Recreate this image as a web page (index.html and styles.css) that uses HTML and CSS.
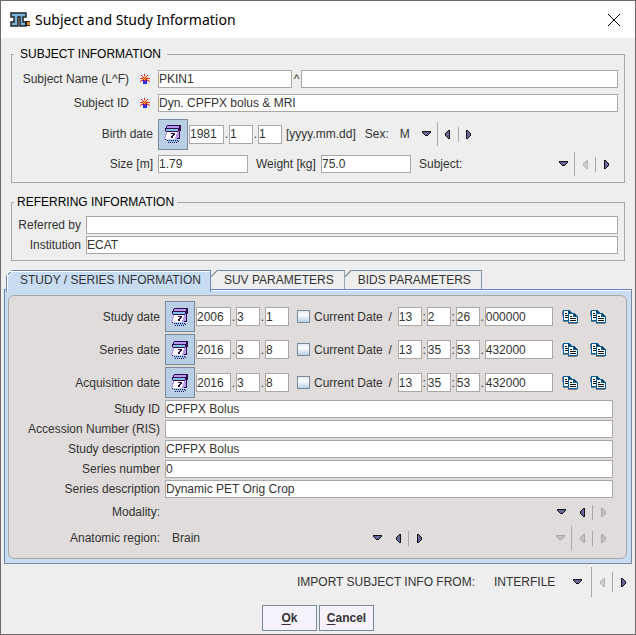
FILE: index.html
```html
<!DOCTYPE html>
<html lang="en">
<head>
<meta charset="utf-8">
<title>Subject and Study Information</title>
<link rel="stylesheet" href="styles.css">
</head>
<body>
<svg class="sprite" aria-hidden="true">
  <symbol id="calendar" viewBox="0 0 18 18" shape-rendering="crispEdges">
    <path fill="#7fc4f0" d="M2 4h12v2H2zM4 15h10v2H4z"/>
    <path fill="#b79af0" d="M1 6h14v8H0v-2h1V9h1V7H1zM3 1h13v2H3z"/>
    <path fill="#fff" d="M4 6h9v3h-1v3h-1v2H1v-1h1v-3h1V7h1z"/>
    <path fill="#330a4a" d="M3 0h14v1H3zM2 1h1v2H2zM1 3h14v1H1zM1 4h1v2H1zM2 6h12v1H2zM15 1h2v5h-2zM15 6h1v8h-1zM14 4h1v2h-1zM7 8h4v1H7zM9 9h2v1H9zM8 10h2v1H8zM7 11h2v2H7zM13 13h2v1h-2z"/>
    <path fill="#330a4a" d="M1 14h1v1H1zM3 15h1v1H3zM5 15h1v1H5zM7 15h1v1H7zM9 15h1v1H9zM11 15h1v1h-1zM13 15h1v1h-1zM4 17h1v1H4zM6 17h1v1H6zM8 17h1v1H8zM10 17h1v1h-1zM12 17h1v1h-1zM14 16h1v1h-1z"/>
  </symbol>
  <symbol id="copy" viewBox="0 0 16 14" shape-rendering="crispEdges">
    <path fill="#808080" d="M0 1h1v11h5v-1H1zM6 12h1v1h8v1H6z"/>
    <path fill="#005f9e" d="M1 0h6l3 3v8H1z"/>
    <path fill="#fff" d="M2 1h4v3h3v6H2z"/>
    <path fill="#111" d="M3 3h2v1H3zM3 5h3v1H3zM3 7h3v1H3zM6 1h1v1H6zM7 2h1v1H7z"/>
    <path fill="#005f9e" d="M6 3h6l4 4v6H6z"/>
    <path fill="#fff" d="M7 4h4v3h4v5H7z"/>
    <path fill="#111" d="M8 6h2v1H8zM8 8h6v1H8zM8 10h6v1H8zM12 4h1v1h-1zM13 5h1v1h-1z"/>
  </symbol>
  <symbol id="required" viewBox="0 0 10 10" shape-rendering="crispEdges">
    <path fill="#d8232a" d="M4 0h1v3H4zM1 1h1v1H1zM2 2h1v1H2zM7 1h1v1H7zM6 2h1v1H6zM0 4h2v1H0zM8 4h2v1H8zM3 3h4v1H3zM2 4h6v2H2zM1 6h2v1H1zM7 6h2v1H7zM0 7h1v1H0zM9 7h1v1H9z"/>
    <path fill="#ffc933" d="M4 2h1v2H4zM2 3h1v1H2zM6 3h1v1H6zM3 4h1v1H3zM5 4h1v1H5zM2 5h1v1H2zM4 5h1v1H4zM7 5h1v1H7z"/>
    <path fill="#2a2af0" d="M3 6h4v4H3z"/>
    <path fill="#d8232a" d="M4 6h2v1H4z"/>
  </symbol>
  <symbol id="down" viewBox="0 0 9 5" shape-rendering="crispEdges">
    <path class="edge" d="M0 0h9v2H8v1H7v1H6v1H3V4H2V3H1V2H0z"/>
    <path class="core" d="M1 1h7v1H7v1H6v1H3V3H2V2H1z"/>
  </symbol>
  <symbol id="prev" viewBox="0 0 5 9" shape-rendering="crispEdges">
    <path class="edge" d="M5 0v9H3V8H2V7H1V6H0V3h1V2h1V1h1V0z"/>
    <path class="core" d="M4 1v7H3V7H2V6H1V3h1V2h1V1z"/>
  </symbol>
  <symbol id="next" viewBox="0 0 5 9" shape-rendering="crispEdges">
    <path class="edge" d="M0 0v9h2V8h1V7h1V6h1V3H4V2H3V1H2V0z"/>
    <path class="core" d="M1 1v7h1V7h1V6h1V3H3V2H2V1z"/>
  </symbol>
</svg>

<main class="window">
  <header class="titlebar">
    <svg class="logo" viewBox="0 0 21 15" aria-hidden="true">
      <path d="M1 1h15v4h-3v5h3v4h-6V5H8v9H1v-4h3V5H1z" fill="#79b4dc" stroke="#222" stroke-width="1.5"/>
      <rect x="15" y="9" width="5" height="5" fill="#222"/>
      <rect x="17" y="10" width="3" height="3" fill="#f08a24"/>
    </svg>
    <h1 class="title">Subject and Study Information</h1>
    <button class="close" aria-label="Close">
      <svg viewBox="0 0 12 12" aria-hidden="true"><path d="M0 0l12 12M12 0L0 12" stroke="#000"/></svg>
    </button>
  </header>

  <fieldset class="group subject">
    <legend class="legend wide">SUBJECT INFORMATION</legend>
    <div class="row">
      <label class="name" for="last">Subject Name (L^F)<svg class="req" aria-hidden="true"><use href="#required"/></svg></label>
      <input class="field last" id="last" value="PKIN1">
      <span class="caret">^</span>
      <input class="field grow" aria-label="First name">
    </div>
    <div class="row">
      <label class="name" for="sid">Subject ID<svg class="req" aria-hidden="true"><use href="#required"/></svg></label>
      <input class="field grow" id="sid" value="Dyn. CPFPX bolus &amp; MRI">
    </div>
    <div class="row birth">
      <label class="name" for="by">Birth date</label>
      <button class="cal" aria-label="Pick birth date"><svg><use href="#calendar"/></svg></button>
      <input class="field year" id="by" value="1981"><span class="dot">.</span><input class="field two" aria-label="Month" value="1"><span class="dot">.</span><input class="field two" aria-label="Day" value="1">
      <span class="format">[yyyy.mm.dd]</span>
      <label class="sex-label" for="sex">Sex:</label>
      <span class="combo sex"><select id="sex"><option>M</option></select><svg class="down"><use href="#down"/></svg></span>
      <span class="bar tall"></span>
      <button class="step" aria-label="Previous"><svg><use href="#prev"/></svg></button>
      <span class="bar"></span>
      <button class="step" aria-label="Next"><svg><use href="#next"/></svg></button>
    </div>
    <div class="row body">
      <label class="name" for="size">Size [m]</label>
      <input class="field measure" id="size" value="1.79">
      <label class="between" for="weight">Weight [kg]</label>
      <input class="field measure" id="weight" value="75.0">
      <label class="subject-label" for="kind">Subject:</label>
      <span class="combo grow"><select id="kind"><option></option></select><svg class="down"><use href="#down"/></svg></span>
      <span class="bar tall"></span>
      <button class="step" aria-label="Previous" disabled><svg><use href="#prev"/></svg></button>
      <span class="bar"></span>
      <button class="step" aria-label="Next"><svg><use href="#next"/></svg></button>
    </div>
  </fieldset>

  <fieldset class="group referring">
    <legend class="legend">REFERRING INFORMATION</legend>
    <div class="row"><label class="name" for="ref">Referred by</label><input class="field grow" id="ref"></div>
    <div class="row"><label class="name" for="inst">Institution</label><input class="field grow" id="inst" value="ECAT"></div>
  </fieldset>

  <section class="tabs">
    <div class="tablist" role="tablist">
      <button class="tab active" role="tab" aria-selected="true">STUDY / SERIES INFORMATION</button>
      <button class="tab" role="tab">SUV PARAMETERS</button>
      <button class="tab" role="tab">BIDS PARAMETERS</button>
    </div>
    <div class="panel" role="tabpanel">
      <div class="sheet">
        <div class="row date">
          <label class="name" for="d1">Study date</label>
          <button class="cal" aria-label="Pick study date"><svg><use href="#calendar"/></svg></button>
          <input class="field year" id="d1" value="2006"><span class="dot">.</span><input class="field two" aria-label="Month" value="3"><span class="dot">.</span><input class="field two" aria-label="Day" value="1">
          <label class="check"><input type="checkbox">Current Date</label><span class="slash">/</span>
          <input class="field two" aria-label="Hour" value="13"><span class="dot">:</span><input class="field two" aria-label="Minute" value="2"><span class="dot">:</span><input class="field two" aria-label="Second" value="26"><span class="dot">.</span><input class="field micro" aria-label="Fraction" value="000000">
          <button class="copy" aria-label="Copy"><svg><use href="#copy"/></svg></button>
          <button class="copy" aria-label="Paste"><svg><use href="#copy"/></svg></button>
        </div>
        <div class="row date">
          <label class="name" for="d2">Series date</label>
          <button class="cal" aria-label="Pick series date"><svg><use href="#calendar"/></svg></button>
          <input class="field year" id="d2" value="2016"><span class="dot">.</span><input class="field two" aria-label="Month" value="3"><span class="dot">.</span><input class="field two" aria-label="Day" value="8">
          <label class="check"><input type="checkbox">Current Date</label><span class="slash">/</span>
          <input class="field two" aria-label="Hour" value="13"><span class="dot">:</span><input class="field two" aria-label="Minute" value="35"><span class="dot">:</span><input class="field two" aria-label="Second" value="53"><span class="dot">.</span><input class="field micro" aria-label="Fraction" value="432000">
          <button class="copy" aria-label="Copy"><svg><use href="#copy"/></svg></button>
          <button class="copy" aria-label="Paste"><svg><use href="#copy"/></svg></button>
        </div>
        <div class="row date">
          <label class="name" for="d3">Acquisition date</label>
          <button class="cal" aria-label="Pick acquisition date"><svg><use href="#calendar"/></svg></button>
          <input class="field year" id="d3" value="2016"><span class="dot">.</span><input class="field two" aria-label="Month" value="3"><span class="dot">.</span><input class="field two" aria-label="Day" value="8">
          <label class="check"><input type="checkbox">Current Date</label><span class="slash">/</span>
          <input class="field two" aria-label="Hour" value="13"><span class="dot">:</span><input class="field two" aria-label="Minute" value="35"><span class="dot">:</span><input class="field two" aria-label="Second" value="53"><span class="dot">.</span><input class="field micro" aria-label="Fraction" value="432000">
          <button class="copy" aria-label="Copy"><svg><use href="#copy"/></svg></button>
          <button class="copy" aria-label="Paste"><svg><use href="#copy"/></svg></button>
        </div>
        <div class="row"><label class="name" for="s1">Study ID</label><input class="field grow" id="s1" value="CPFPX Bolus"></div>
        <div class="row"><label class="name" for="s2">Accession Number (RIS)</label><input class="field grow" id="s2"></div>
        <div class="row"><label class="name" for="s3">Study description</label><input class="field grow" id="s3" value="CPFPX Bolus"></div>
        <div class="row"><label class="name" for="s4">Series number</label><input class="field grow" id="s4" value="0"></div>
        <div class="row"><label class="name" for="s5">Series description</label><input class="field grow" id="s5" value="Dynamic PET Orig Crop"></div>
        <div class="row choice">
          <label class="name" for="mod">Modality:</label>
          <span class="combo grow"><select id="mod"><option></option></select><svg class="down"><use href="#down"/></svg></span>
          <button class="step" aria-label="Previous"><svg><use href="#prev"/></svg></button>
          <span class="bar"></span>
          <button class="step" aria-label="Next" disabled><svg><use href="#next"/></svg></button>
        </div>
        <div class="row choice">
          <label class="name" for="region">Anatomic region:</label>
          <span class="combo region"><select id="region"><option>Brain</option></select><svg class="down"><use href="#down"/></svg></span>
          <button class="step" aria-label="Previous"><svg><use href="#prev"/></svg></button>
          <span class="bar"></span>
          <button class="step" aria-label="Next"><svg><use href="#next"/></svg></button>
          <span class="combo grow off"><select aria-label="Subregion" disabled><option></option></select><svg class="down"><use href="#down"/></svg></span>
          <span class="bar tall"></span>
          <button class="step" aria-label="Previous" disabled><svg><use href="#prev"/></svg></button>
          <span class="bar"></span>
          <button class="step" aria-label="Next" disabled><svg><use href="#next"/></svg></button>
        </div>
      </div>
    </div>
  </section>

  <div class="import">
    <label for="source">IMPORT SUBJECT INFO FROM:</label>
    <span class="combo source"><select id="source"><option>INTERFILE</option></select><svg class="down"><use href="#down"/></svg></span>
    <span class="bar tall"></span>
    <button class="step" aria-label="Previous" disabled><svg><use href="#prev"/></svg></button>
    <span class="bar"></span>
    <button class="step" aria-label="Next"><svg><use href="#next"/></svg></button>
  </div>

  <footer class="actions">
    <button class="action"><u>O</u>k</button>
    <button class="action"><u>C</u>ancel</button>
  </footer>
</main>
</body>
</html>
```
FILE: styles.css
```css
* { box-sizing: border-box; }

body {
  margin: 0;
  background: #eee;
  color: #333;
  font: 12px/14px "Liberation Sans", Arial, sans-serif;
}

button, input, select {
  margin: 0;
  padding: 0;
  border: 0;
  border-radius: 0;
  background: none;
  color: inherit;
  font: inherit;
  appearance: none;
}

svg { display: block; flex: none; }
.sprite { position: absolute; width: 0; height: 0; }

.window {
  display: flex;
  flex-direction: column;
  min-height: 100vh;
  border: 1px solid #6e696c;
}

.titlebar {
  display: flex;
  align-items: center;
  height: 37px;
  padding: 0 15px 0 9px;
  background: #fff;
  color: #000;
}
.logo { width: 21px; height: 15px; }
.title {
  flex: 1;
  margin: 0 0 0 4px;
  font: 14px/20px "Noto Sans", "Open Sans", sans-serif;
}
.close svg { width: 12px; height: 12px; }

.group {
  min-width: 0;
  margin: 9px 10px 0;
  border: 1px solid #aaa7a7;
}
.legend {
  margin-left: 2px;
  padding: 0 3px;
  color: #000;
  line-height: 15px;
}
.legend.wide { padding: 0 6px; }
.subject { padding: 5px 6px 7px 0; }
.subject .row { min-height: 24px; }
.subject .birth { min-height: 38px; }
.subject .body { min-height: 22px; padding-right: 2px; }
.subject .name { width: 141px; }
.referring { margin-top: 12px; padding: 5px 6px 5px 0; }
.referring .name { width: 69px; }

.row {
  display: flex;
  align-items: center;
  min-height: 20px;
}
.name {
  display: flex;
  flex: none;
  align-items: center;
  justify-content: flex-end;
  margin-right: 5px;
  white-space: nowrap;
}
.req { width: 10px; height: 10px; margin: 0 3px 0 11px; }

.field {
  flex: none;
  min-width: 0;
  height: 18px;
  border: 1px solid #aaa7a7;
  background: #fff;
}
.grow { flex: 1; }
.last { width: 134px; }
.caret { width: 9px; text-align: center; }
.year, .two, .micro { height: 19px; }
.year { width: 35px; }
.two { width: 24px; }
.micro { width: 68px; }
.measure { width: 90px; }
.dot { width: 5px; text-align: center; }
.format { margin-left: 4px; }
.sex-label { margin: 0 4px 0 9px; }
.between { width: 65px; margin-left: 8px; }
.subject-label { margin-left: 8px; }

.cal {
  display: grid;
  place-items: center;
  flex: none;
  width: 30px;
  height: 31px;
  margin-right: 1px;
  border: 1px solid #7a8a99;
  background: #b8cfe5;
}
.cal svg { width: 18px; height: 18px; }

.check {
  display: flex;
  align-items: center;
  gap: 4px;
  margin-left: 8px;
  white-space: nowrap;
}
.check input {
  width: 13px;
  height: 13px;
  border: 1px solid #7a8a99;
  background: linear-gradient(#dfe9f3, #fff 35%, #b8cfe5);
}
.slash { width: 15px; text-align: center; }
.copy { margin-left: 9px; }
.copy + .copy { margin-left: 12px; }
.copy svg { width: 16px; height: 14px; }

.combo { display: grid; align-items: center; }
.combo select {
  grid-area: 1 / 1;
  width: 100%;
  height: 20px;
  padding-left: 7px;
  opacity: 1;
}
.combo .down {
  grid-area: 1 / 1;
  justify-self: end;
  width: 9px;
  height: 5px;
  margin: 0 6px 1px 0;
  pointer-events: none;
}
.sex { width: 44px; }
.region { width: 223px; }
.source { width: 104px; }

.edge { fill: #111; }
.core { fill: #666699; }
.off svg, .step:disabled svg { --off: #bbb; }
.off .down, .step:disabled svg { filter: grayscale(1); opacity: 0.25; }

.bar { width: 1px; height: 15px; background: #aaa7a7; }
.bar.tall { height: 24px; margin: -2px 0; }
.step {
  display: grid;
  place-items: center;
  width: 20px;
  height: 20px;
}
.step svg { width: 5px; height: 9px; }

.tabs { margin: 9px 3px 0; }
.tablist { display: flex; padding-left: 2px; }
.tab {
  height: 19px;
  padding: 0 10px 0 13px;
  background: linear-gradient(135deg, #7a8a99 5px, transparent 5px) border-box no-repeat;
  border-top: 1px solid #7a8a99;
  border-right: 1px solid #7a8a99;
  clip-path: polygon(6px 0, 100% 0, 100% 100%, 0 100%, 0 6px);
  white-space: nowrap;
}
.tab.active {
  position: relative;
  height: 22px;
  margin-bottom: -3px;
  padding: 0 9px 3px 13px;
  background: linear-gradient(135deg, #6382bf 5px, #fff 5px, #fff 6px, #c8ddf2 6px) border-box no-repeat;
  border: 1px solid #6382bf;
  border-bottom: 0;
  box-shadow: inset 1px 1px #fff;
}
.panel {
  padding: 5px 4px 4px 3px;
  border: 1px solid #7a8a99;
  border-top-color: #6382bf;
  border-left-color: #6382bf;
  background: #c8ddf2;
  box-shadow: inset 0 1px #fff;
}
.sheet {
  padding: 4px 13px 7px 0;
  border: 1px solid #aaa7a7;
  border-radius: 6px;
  background: #e0dcdb;
}
.sheet .name { width: 151px; }
.date { min-height: 33px; }
.choice { min-height: 26px; }

.import {
  display: flex;
  align-items: center;
  justify-content: flex-end;
  min-height: 36px;
  padding-right: 2px;
}
.import .source { margin-left: 12px; }
.import .down { margin-right: 9px; }
.import .bar { height: 20px; }
.import .bar.tall { height: 30px; }

.actions {
  display: flex;
  justify-content: center;
  gap: 2px;
  padding: 5px 0 3px;
}
.action {
  width: 55px;
  height: 26px;
  border: 1px solid #7a8a99;
  background: #f5f2fb;
  font-weight: bold;
}
.action u { text-underline-offset: 2px; }
```
